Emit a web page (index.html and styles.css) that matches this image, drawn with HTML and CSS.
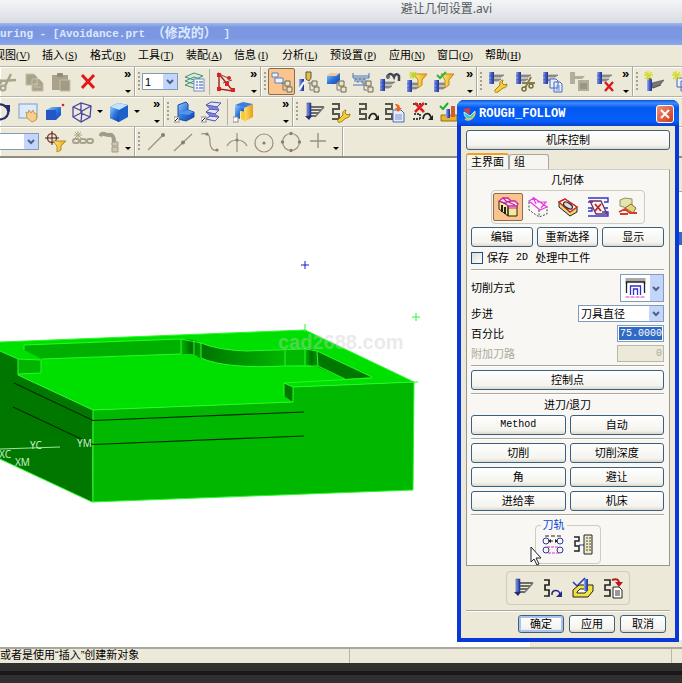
FILE: index.html
```html
<!DOCTYPE html>
<html lang="zh-CN">
<head>
<meta charset="utf-8">
<title>避让几何设置.avi</title>
<link rel="stylesheet" href="styles.css">
</head>
<body>
<svg class="defs" aria-hidden="true">
<defs>
<linearGradient id="steel" x1="0" x2="1"><stop offset="0" stop-color="#9cb0ee"/><stop offset=".5" stop-color="#4560c8"/><stop offset="1" stop-color="#22308c"/></linearGradient>
<linearGradient id="blue" x1="0" y1="0" x2="1" y2="1"><stop offset="0" stop-color="#9ccaf8"/><stop offset=".5" stop-color="#2d77dc"/><stop offset="1" stop-color="#123ea8"/></linearGradient>
<linearGradient id="gold" x1="0" x2="1"><stop offset="0" stop-color="#fff08a"/><stop offset="1" stop-color="#e8a010"/></linearGradient>
<linearGradient id="curveA"><stop offset="0" stop-color="#00b800"/><stop offset=".5" stop-color="#007000"/><stop offset="1" stop-color="#00a000"/></linearGradient>
<linearGradient id="curveB"><stop offset="0" stop-color="#007400"/><stop offset="1" stop-color="#00b800"/></linearGradient>
</defs>
<symbol id="p-tool" viewBox="0 0 22 22"><path d="M7 5h10l-3 2H7M7 9h7l-3 2H7" fill="#999" stroke="#666" stroke-width=".6"/><rect x="2" y="2" width="5" height="12" fill="url(#steel)"/><path d="M2 6l5-1M2 10l5-1M2 13l5-1" stroke="#3a4ca4" stroke-width=".6"/></symbol>
<symbol id="p-snake" viewBox="0 0 22 22"><path d="M2 3h7v5H3v5h6v5H2" fill="none" stroke="#55554c" stroke-width="2"/></symbol>
<symbol id="p-wrench" viewBox="0 0 22 22"><path d="M8 19l5-5c-1-3 1-5 3-5l-1 3 2 2 3-1c0 3-2 4-4 4l-5 4c-2 1-4 0-3-2z" fill="#f4cf3a" stroke="#a87c10"/></symbol>
<symbol id="p-pages" viewBox="0 0 22 22"><path d="M9 8h6l2 2v7H9zM13 11h6l2 2v8h-8z" fill="#e6efff" stroke="#4968b8"/><path d="M15 15h4M15 17h4M15 19h4" stroke="#6d8bd0"/></symbol>
<symbol id="p-tree" viewBox="0 0 22 22"><path d="M10 12h5M12 12v7h3" fill="none" stroke="#777"/><path d="M14 10h5v5h-5zM16 16h5v5h-5z" fill="#eee6b8" stroke="#666"/></symbol>
<symbol id="p-funnel" viewBox="0 0 22 22"><path d="M8 5h13l-5 6v5l-4 3v-8z" fill="url(#gold)" stroke="#c58a14"/></symbol>
<symbol id="p-arc" viewBox="0 0 22 22"><path d="M12 18c1-7 7-7 8-1" fill="none" stroke="#222" stroke-width="1.8"/><path d="M22 14v5h-5z" fill="#222"/></symbol>
<symbol id="i-cut" viewBox="0 0 22 22"><path d="M15 3l-6 12M4 10l16-1" stroke="#aaa38c" stroke-width="2.5"/><circle cx="7" cy="17" r="2.5" fill="none" stroke="#aaa38c" stroke-width="2"/><circle cx="3" cy="11" r="2" fill="none" stroke="#aaa38c" stroke-width="2"/></symbol>
<symbol id="i-copy" viewBox="0 0 22 22"><path d="M3 3h8l3 3v8H3zM9 8h7l4 4v8H9z" fill="#aaa38c" stroke="#c4bea9"/><path d="M11 13h5M11 16h7" stroke="#c8c3b0"/></symbol>
<symbol id="i-paste" viewBox="0 0 22 22"><path d="M2 4h16v15H2z" fill="#aaa38c"/><rect x="7" y="2" width="6" height="4" rx="1" fill="#918b77"/><path d="M10 9h10v11H10z" fill="#a29b84" stroke="#c4bea9"/></symbol>
<symbol id="i-x" viewBox="0 0 22 22"><path d="M5 4l12 13M17 4L5 17" stroke="#e01818" stroke-width="3"/></symbol>
<symbol id="i-layers" viewBox="0 0 22 22"><path d="M2 6l9-4 9 3-9 4zM2 10l9-4 9 3-9 4zM2 14l9-4 9 3-9 4z" fill="#d5ece2" stroke="#4b9173"/><rect x="11" y="8" width="10" height="12" fill="#f4f7ff" stroke="#7890c0"/><path d="M13 11h2M13 14h2M13 17h2M16 11h4M16 14h4M16 17h4" stroke="#3553a8"/></symbol>
<symbol id="i-csys" viewBox="0 0 22 22"><path d="M4 3v15l14 2z" fill="none" stroke="#a02020" stroke-width="1.4"/><path d="M4 3l9 4M8 12l9-3" stroke="#804040"/><g fill="#e02020"><rect x="2" y="2" width="4" height="4"/><rect x="2" y="16" width="4" height="4"/><rect x="16" y="17" width="4" height="4"/><rect x="10" y="11" width="4" height="4"/><circle cx="14" cy="7" r="2"/></g></symbol>
<symbol id="i-prog" viewBox="0 0 22 22"><path d="M1 2h6v4H1zM4 7h8v5H4z" fill="#eef4ff" stroke="#5c80c0"/><use href="#p-tree"/></symbol>
<symbol id="i-mach" viewBox="0 0 22 22"><path d="M8 1h5v6l-2 3-3-2z" fill="#e9bf33" stroke="#555"/><path d="M1 8h5v12H1z" fill="url(#steel)"/><path d="M1 19l5-8" stroke="#fff" stroke-width="2"/><use href="#p-tree"/></symbol>
<symbol id="i-geom" viewBox="0 0 22 22"><path d="M2 5l4-3h9v7l-4 4H2z" fill="url(#blue)"/><path d="M2 5l4-3h9l-4 3z" fill="#f5c59b"/><use href="#p-tree"/></symbol>
<symbol id="i-meth" viewBox="0 0 22 22"><path d="M1 2v5h16V2" fill="none" stroke="#4777b5"/><path d="M1 5h16M3 11v-3h2v3h2v-3h2v3h2v-3h2v3M1 14h13" fill="none" stroke="#4777b5"/><use href="#p-tree"/></symbol>
<symbol id="i-gen" viewBox="0 0 22 22"><use href="#p-tool" y="6" x="-1"/><path d="M8 6c2-4 5-4 7 0 1-3 3-4 5-1v5" fill="none" stroke="#404858" stroke-width="2.5"/><circle cx="9" cy="6" r="2" fill="#667"/></symbol>
<symbol id="i-fnew" viewBox="0 0 22 22"><use href="#p-tool" y="7" x="-1"/><use href="#p-funnel" y="-2"/><path d="M7 1v7M3 4h8M4 1l6 6M10 1L4 7" stroke="#c3d62b" stroke-width="1.2"/></symbol>
<symbol id="i-fchk" viewBox="0 0 22 22"><use href="#p-tool" y="7" x="-1"/><use href="#p-funnel" y="-2"/><path d="M4 4l3 3 6-6" fill="none" stroke="#2eb83c" stroke-width="2"/></symbol>
<symbol id="i-tw" viewBox="0 0 22 22"><use href="#p-tool" y="-1"/><use href="#p-wrench"/></symbol>
<symbol id="i-tc" viewBox="0 0 22 22"><use href="#p-tool" y="-1"/><path d="M17 6l-6 11M8 12h13" stroke="#88804c" stroke-width="2"/><circle cx="10" cy="18" r="2" fill="none" stroke="#776f3c" stroke-width="1.5"/><circle cx="17" cy="15" r="2" fill="none" stroke="#776f3c" stroke-width="1.5"/></symbol>
<symbol id="i-tp" viewBox="0 0 22 22"><use href="#p-tool" y="-1"/><use href="#p-pages"/></symbol>
<symbol id="i-tg" viewBox="0 0 22 22"><path d="M2 1h5v12H2zM7 5h10l-3 3H7zM10 9h11v11H10z" fill="#b3ad9b"/><path d="M12 12h7v6h-7z" fill="#9b9581"/></symbol>
<symbol id="i-tx" viewBox="0 0 22 22"><use href="#p-tool" y="-1"/><path d="M10 11l8 9M18 11l-8 9" stroke="#d81c1c" stroke-width="2.4"/></symbol>
<symbol id="i-new" viewBox="0 0 22 22"><path d="M9 12l12-3-4 5-8 3z" fill="#777" stroke="#444" stroke-width=".6"/><path d="M10 17l8-3" stroke="#555"/><rect x="4" y="7" width="5" height="13" fill="url(#steel)"/><path d="M5 0v9M1 4h9M2 1l7 7M9 1L2 8" stroke="#d6dc2a" stroke-width="1.4"/></symbol>
<symbol id="i-new2" viewBox="0 0 22 22"><use href="#p-pages" x="-2" y="-1"/><path d="M6 0v9M2 4h9M3 1l7 7M10 1L3 8" stroke="#d6dc2a" stroke-width="1.4"/></symbol>
<symbol id="i-rot" viewBox="0 0 22 22"><path d="M5 5c9-5 16 3 12 10-3 4-8 4-11 2" fill="none" stroke="#27306c" stroke-width="2.2"/><path d="M12 4h8v7z" fill="#27306c"/></symbol>
<symbol id="i-pan" viewBox="0 0 22 22"><rect x="2" y="3" width="18" height="14" fill="#dceafc" stroke="#7d9bd0"/><path d="M9 11l2 1 1-3 2 3 2-3 1 3 3 1-1 6-4 2-5-4z" fill="#f7cf8a" stroke="#c9974d"/></symbol>
<symbol id="i-brick" viewBox="0 0 22 22"><path d="M2 9l6-3h9v8l-5 5H2z" fill="url(#blue)"/><path d="M2 9h10v10H2z" fill="#2556c8"/><circle cx="19" cy="4" r="1.3" fill="#e02020"/></symbol>
<symbol id="i-wire" viewBox="0 0 22 22"><path d="M2 6l8-4 10 3-1 11-9 5-8-5zM2 6l9 4 9-5M11 10l-1 11M10 2v10M10 12l-8 4M10 12l9 4" fill="none" stroke="#4646a4" stroke-width="1.3"/></symbol>
<symbol id="i-cube" viewBox="0 0 22 22"><path d="M2 6l8-4 10 2v12l-9 5-9-4z" fill="#1d62c8"/><path d="M2 6l8-4 10 2-9 5z" fill="#c2e3ff"/><path d="M2 6l9 3v12l-9-4z" fill="url(#blue)"/></symbol>
<symbol id="i-part" viewBox="0 0 22 22"><path d="M4 4l8-3 2 2v6l6 2v5l-8 4-8-2z" fill="url(#blue)" stroke="#1d48a5"/><path d="M14 9l6 2-6 3-10-2" fill="#5595ec"/><rect y="16" width="5" height="5" fill="#fff" stroke="#888"/><path d="M1 20l3-3" stroke="#222"/></symbol>
<symbol id="i-sheet" viewBox="0 0 22 22"><path d="M5 4l5-3 10 1-4 4zM5 11l4-3 9 1-4 4zM5 18l4-3 9 1-4 4z" fill="#e4e4fb" stroke="#5353b2"/><path d="M5 4l11 2 2 3-9-1zM5 11l9 2 4 3-9-1z" fill="#8686dc" stroke="#5353b2" stroke-width=".7"/><rect y="16" width="5" height="5" fill="#fff" stroke="#888"/><path d="M1 20l3-3" stroke="#222"/></symbol>
<symbol id="i-gold" viewBox="0 0 22 22"><path d="M9 8l11-5v13l-9 5z" fill="url(#gold)"/><path d="M2 4l8-3 10 2-9 4z" fill="#3d7ce0"/><path d="M2 4l9 3v4l-4-1v8l-5-2z" fill="url(#blue)"/><path d="M8 10l4 1v9l-4-2z" fill="#f9cc34"/><rect y="16" width="5" height="5" fill="#fff" stroke="#888"/></symbol>
<symbol id="i-mill" viewBox="0 0 22 22"><path d="M8 6h13M7 9h11M7 12h9M7 15h6" stroke="#444" stroke-width="1.5"/><path d="M21 6l-9 10" stroke="#777" stroke-width="1.500"/><rect x="4" y="2" width="4" height="13" fill="url(#steel)" stroke="#203080" stroke-width=".5"/><path d="M2 15h7l-3 4z" fill="#222c6a"/></symbol>
<symbol id="i-sw" viewBox="0 0 22 22"><use href="#p-snake"/><use href="#p-wrench"/></symbol>
<symbol id="i-sa" viewBox="0 0 22 22"><use href="#p-snake"/><use href="#p-arc"/></symbol>
<symbol id="i-sp" viewBox="0 0 22 22"><use href="#p-snake" x="-1"/><path d="M9 9h8l3 3v9H9z" fill="#e4edff" stroke="#526aa5"/><path d="M11 14h7M11 16h7M11 18h7" stroke="#7790c4"/><path d="M11 3c4 0 5 2 5 4h2l-4 4-3-4h2c0-2-1-2-2-4z" fill="#e86a22"/></symbol>
<symbol id="i-sx" viewBox="0 0 22 22"><path d="M2 3h14M2 18h7M3 13h6v5" fill="none" stroke="#444" stroke-width="2" stroke-dasharray="2 1"/><path d="M4 2l9 9M13 2l-9 9" stroke="#e02020" stroke-width="2.5"/><use href="#p-arc"/></symbol>
<symbol id="i-ver" viewBox="0 0 22 22"><path d="M3 14h16v6H3z" fill="#e9b42c" stroke="#9a7010"/><path d="M8 8h4v9H8z" fill="url(#steel)"/><path d="M13 5h4v11h-4z" fill="#d25c30"/><path d="M2 5l3 3 5-6" fill="none" stroke="#20b030" stroke-width="2"/></symbol>
<symbol id="i-snapf" viewBox="0 0 22 22"><circle cx="7" cy="7" r="4.5" fill="none" stroke="#a04030" stroke-width="1.5"/><path d="M7 0v14M0 7h14" stroke="#282828"/><path d="M8 10h13l-5 5v4l-4 2v-6z" fill="url(#gold)" stroke="#b98a20"/></symbol>
<symbol id="i-chain" viewBox="0 0 22 22"><path d="M6 0v8M2 4h8M3 1l6 6M9 1L3 7" stroke="#aaa38c"/><g fill="none" stroke="#aaa38c" stroke-width="2"><rect x="1" y="8" width="6" height="4" rx="2"/><rect x="8" y="8" width="6" height="4" rx="2"/><rect x="15" y="8" width="6" height="4" rx="2"/></g></symbol>
<symbol id="i-path" viewBox="0 0 22 22"><path d="M1 5c3-5 6 0 9-1s5 1 5 7" fill="none" stroke="#a29b86" stroke-width="4"/><path d="M13 11h6v4h-6zM13 16h6v5h-6z" fill="#ccc7b5" stroke="#a29b86"/></symbol>
<symbol id="i-end" viewBox="0 0 22 22"><path d="M3 19L18 4" stroke="#9b9080" stroke-width="1.2"/><circle cx="18" cy="4" r="2" fill="#8c7d6e"/></symbol>
<symbol id="i-mid" viewBox="0 0 22 22"><path d="M2 20L20 3" stroke="#9b9080" stroke-width="1.2"/><circle cx="11" cy="11.5" r="2" fill="#8c7d6e"/></symbol>
<symbol id="i-ctl" viewBox="0 0 22 22"><path d="M2 3c10-2 9 5 9 9s3 9 8 7" fill="none" stroke="#9b9080" stroke-width="1.2"/><circle cx="8" cy="3" r="1.6" fill="#8c7d6e"/><circle cx="18" cy="19" r="1.6" fill="#8c7d6e"/></symbol>
<symbol id="i-int" viewBox="0 0 22 22"><path d="M11 2v19M1 15c4-8 16-8 20 0" fill="none" stroke="#9b9080" stroke-width="1.2"/><circle cx="11" cy="9" r="1.6" fill="#8c7d6e"/></symbol>
<symbol id="i-cen" viewBox="0 0 22 22"><circle cx="11" cy="12" r="9" fill="none" stroke="#9b9080" stroke-width="1.2"/><circle cx="11" cy="12" r="1.6" fill="#8c7d6e"/></symbol>
<symbol id="i-quad" viewBox="0 0 22 22"><circle cx="11" cy="11" r="8.5" fill="none" stroke="#9b9080" stroke-width="1.2"/><g fill="#8c7d6e"><circle cx="11" cy="2.5" r="1.7"/><circle cx="11" cy="19.5" r="1.7"/><circle cx="2.500" cy="11" r="1.700"/><circle cx="19.500" cy="11" r="1.700"/></g></symbol>
<symbol id="i-pt" viewBox="0 0 22 22"><path d="M11 2v15M3 10h16" stroke="#9b9080" stroke-width="1.4"/></symbol>
<symbol id="g-part" viewBox="0 0 22 22"><path d="M2 5v8l9 7V9zM11 9v11h9V9z" fill="#f6ea94" stroke="#222"/><path d="M5 9v7M8 11v7" stroke="#222" stroke-width="2"/><path d="M2 5l4-3h5l3 3h4l3 3-1 2h-9L8 7z" fill="#fbe6c4" stroke="#c322b4" stroke-width="1.300"/><path d="M6 2l3 3v3M14 5l-5 1M9 5l9 4M12 12h8" fill="none" stroke="#c322b4" stroke-width="1.200"/><path d="M14 13h5v6h-5z" fill="#f6ea94"/></symbol>
<symbol id="g-blank" viewBox="0 0 22 22"><path d="M2 6v8l10 7 8-3v-7M12 14v7" fill="none" stroke="#444" stroke-dasharray="2 1.500"/><path d="M2 5l5-3 13 9-7 3zM6 1l3 7M10 6h9l-5 6" fill="none" stroke="#e63be6" stroke-width="1.2"/></symbol>
<symbol id="g-check" viewBox="0 0 22 22"><path d="M2 6l6-3 12 8v5l-7 4L2 11z" fill="#e7d67c" stroke="#222"/><path d="M2 6l6-3 12 8-7 5z" fill="#fff" stroke="#d42020" stroke-width="1.5"/><ellipse cx="11" cy="9.500" rx="5" ry="2.500" transform="rotate(33 11 9.500)" fill="#ddd" stroke="#333" stroke-width="1.300"/></symbol>
<symbol id="g-trim" viewBox="0 0 22 22"><path d="M1 2h20v4h-4M1 6h5M1 12h4v3H1M21 12h-4M1 20h20v-4h-6" fill="none" stroke="#3434d8" stroke-width="1.4"/><path d="M3 5h11l6 13H9z" fill="none" stroke="#70305c" stroke-width="1.300"/><path d="M8 8l6 7M14 8l-6 7" stroke="#c02020" stroke-width="1.8"/></symbol>
<symbol id="g-fix" viewBox="0 0 22 22"><path d="M3 4l5-2 7 1v6l-5 3-7-2z" fill="#e6e4ad" stroke="#909060"/><path d="M8 12l6-4 5 4-3 5z" fill="#e8d378" stroke="#77703e"/><path d="M2 16l6-3 5 4h7M3 18h8" fill="none" stroke="#d63a28" stroke-width="1.8"/></symbol>
<symbol id="g-opt" viewBox="0 0 22 22"><path d="M3 2h16M7 7h8" stroke="#222" stroke-dasharray="4 2"/><g fill="none" stroke="#2d35a0"><circle cx="4" cy="7" r="3"/><circle cx="18" cy="7" r="3"/><circle cx="4" cy="16" r="3"/><circle cx="18" cy="16" r="3"/></g><path d="M5 13h12M6 19h12" stroke="#d43bb8" stroke-dasharray="3 1"/><path d="M9 5v4l-3-2zM13 5v4l3-2z" fill="#222"/></symbol>
<symbol id="g-list" viewBox="0 0 22 22"><path d="M2 3h5v4H3v5h4v5H2" fill="none" stroke="#222" stroke-width="1.500"/><path d="M7 11h5" stroke="#2d35a0"/><path d="M12 1h8v19h-8z" fill="#eee9c5" stroke="#222"/><path d="M14 4h5M14 7h5M14 10h5M14 13h5M14 16h5" stroke="#444" stroke-dasharray="2 1"/></symbol>
<symbol id="g-replay" viewBox="0 0 22 22"><path d="M2 3h5v5H3v5h4v6H2" fill="none" stroke="#222" stroke-width="1.700"/><path d="M10 18c-1-6 8-6 8 0" fill="none" stroke="#252a88" stroke-width="1.500"/><path d="M20 14v6h-6z" fill="#252a88"/></symbol>
<symbol id="g-ver" viewBox="0 0 22 22"><path d="M1 13l6-5h14v6l-5 6H1z" fill="#f3e13e" stroke="#222"/><path d="M5 15l3-3h8l-3 4H5z" fill="#fff" stroke="#222"/><path d="M12 2h4v12h-4z" fill="url(#steel)"/><path d="M1 5l4 4 8-8" fill="none" stroke="#2438b0" stroke-width="1.500"/></symbol>
<symbol id="g-post" viewBox="0 0 22 22"><path d="M2 3h6v5H3v5h5v6H2" fill="none" stroke="#222" stroke-width="1.600"/><path d="M11 10h6l3 3v8h-9z" fill="#fff" stroke="#222"/><path d="M13 14h5M13 16h5M13 18h5" stroke="#333"/><path d="M10 3c5-2 7 0 7 3" fill="none" stroke="#b81820" stroke-width="2"/><path d="M13 5h8l-4 5z" fill="#b81820"/></symbol>
<symbol id="g-follow" viewBox="0 0 22 22"><path d="M1 1h20v6h-2V5H3v2H1z" fill="#aaa"/><path d="M2 16V5h18v11" fill="none" stroke="#222" stroke-width="1.300"/><path d="M6 18V9h10v9M9 18v-6h4v6" fill="none" stroke="#3030d0" stroke-width="1.300"/><path d="M1 20h20" stroke="#d03cc0" stroke-dasharray="4 1"/></symbol>
</svg>

<header class="player">避让几何设置.avi</header>
<main class="app">
  <div class="app-title">uring - [Avoidance.prt <span>（修改的）</span> ]</div>
  <nav class="menu">
    <a href="#">视图<span>(<u>V</u>)</span></a><a href="#">插入<span>(<u>S</u>)</span></a><a href="#">格式<span>(<u>R</u>)</span></a><a href="#">工具<span>(<u>T</u>)</span></a><a href="#">装配<span>(<u>A</u>)</span></a><a href="#">信息<span>(<u>I</u>)</span></a><a href="#">分析<span>(<u>L</u>)</span></a><a href="#">预设置<span>(<u>P</u>)</span></a><a href="#">应用<span>(<u>N</u>)</span></a><a href="#">窗口<span>(<u>O</u>)</span></a><a href="#">帮助<span>(<u>H</u>)</span></a>
  </nav>
  <div class="bar">
    <div class="grp lead w-134"><button><svg><use href="#i-cut"/></svg></button><button><svg><use href="#i-copy"/></svg></button><button><svg><use href="#i-paste"/></svg></button><button><svg><use href="#i-x"/></svg></button><i class="more"></i></div>
    <div class="grp w-126"><i class="grip"></i><select class="combo num" aria-label="图层"><option>1</option></select><button><svg><use href="#i-layers"/></svg></button><i class="line"></i><button><svg><use href="#i-csys"/></svg></button><i class="more"></i></div>
    <div class="grp w-216"><i class="grip"></i><button class="on"><svg><use href="#i-prog"/></svg></button><button><svg><use href="#i-mach"/></svg></button><button><svg><use href="#i-geom"/></svg></button><button><svg><use href="#i-meth"/></svg></button><button><svg><use href="#i-gen"/></svg></button><button><svg><use href="#i-fnew"/></svg></button><button><svg><use href="#i-fchk"/></svg></button><i class="more"></i></div>
    <div class="grp w-156"><i class="grip"></i><button><svg><use href="#i-tw"/></svg></button><button><svg><use href="#i-tc"/></svg></button><button><svg><use href="#i-tp"/></svg></button><button><svg><use href="#i-tg"/></svg></button><button><svg><use href="#i-tx"/></svg></button><i class="more"></i></div>
    <div class="grp"><i class="grip"></i><button><svg><use href="#i-new"/></svg></button><button><svg><use href="#i-new2"/></svg></button></div>
  </div>
  <div class="bar">
    <div class="grp lead2 w-163"><button><svg><use href="#i-rot"/></svg></button><button><svg><use href="#i-pan"/></svg></button><button><svg><use href="#i-brick"/></svg></button><button><svg><use href="#i-wire"/></svg></button><i class="drop"></i><button><svg><use href="#i-cube"/></svg></button><i class="drop"></i><i class="more"></i></div>
    <div class="grp w-129"><i class="grip"></i><button><svg><use href="#i-part"/></svg></button><button><svg><use href="#i-sheet"/></svg></button><i class="line"></i><button><svg><use href="#i-gold"/></svg></button><i class="more"></i></div>
    <div class="grp"><i class="grip"></i><button><svg><use href="#i-mill"/></svg></button><button><svg><use href="#i-sw"/></svg></button><button><svg><use href="#i-sa"/></svg></button><button><svg><use href="#i-sp"/></svg></button><button><svg><use href="#i-sx"/></svg></button><button><svg><use href="#i-ver"/></svg></button></div>
  </div>
  <div class="bar">
    <div class="grp w-134"><select class="combo filter" aria-label="过滤器"><option></option></select><button><svg><use href="#i-snapf"/></svg></button><button><svg><use href="#i-chain"/></svg></button><button><svg><use href="#i-path"/></svg></button><i class="drop low"></i></div>
    <div class="grp w-208"><i class="grip"></i><button><svg><use href="#i-end"/></svg></button><button><svg><use href="#i-mid"/></svg></button><button><svg><use href="#i-ctl"/></svg></button><button><svg><use href="#i-int"/></svg></button><button><svg><use href="#i-cen"/></svg></button><button><svg><use href="#i-quad"/></svg></button><button><svg><use href="#i-pt"/></svg></button><i class="drop low"></i></div>
    <div class="grp"></div>
  </div>

  <div class="work">
    <svg class="scene" viewBox="0 158 530 489" preserveAspectRatio="xMinYMin meet">
      <path d="M0 342L305 330 414 382 293 387 293 402 93 410 18 375 0 366z" fill="#00e000"/>
      <path d="M0 351L18 359V375L93 410 92 502 0 459z" fill="#007800"/>
      <path d="M93 410L293 402V387L414 382 413 490 92 502z" fill="#00b800"/>
      <path d="M24 345L181 339V354L42 359 24 350z" fill="#00b000"/>
      <path d="M18 359L41 360V373L18 374z" fill="#00b400"/>
      <path d="M181 339L194 340 201 343V359L194 354H181z" fill="url(#curveA)"/>
      <path d="M201 343Q218 350 246 351L285 350V366Q225 369 201 358z" fill="url(#curveB)"/>
      <path d="M285 350L305 349V365L285 366z" fill="#00b800"/>
      <path d="M305 349Q313 349 317 351L318 367 305 365z" fill="url(#curveA)"/>
      <path d="M317 351L372 377 345 379 318 367z" fill="#007800"/>
      <path d="M284 383L293 387V402L284 396z" fill="#007800"/>
      <g fill="none" stroke="#28f828"><path d="M0 342L305 330 414 382 413 490 92 502 0 459M93 410V502M93 410L293 402V387L414 382M93 410L18 375V359L0 351M18 359L41 360V373L18 374M24 350V345L181 339 201 343Q218 350 246 351L305 349 317 351 372 377M42 359L181 354M181 339V354M194 340V354M201 343V358Q225 369 285 366L318 366 345 379M285 350V366M305 349V365M317 351L318 366M284 396V383L372 378M284 383L293 387M305 324V332M410 382H418M412 317H420M416 313V321"/></g>
      <path d="M14 383L93 420.500 304 412M13 407L93 444.500 304 436" fill="none" stroke="#002800" stroke-width="1.200"/>
      <path d="M301 265H309M305 261V269" stroke="#1818e0"/>
      <path d="M0 449L60 447" stroke="#9fe49f"/>
      <g class="axis"><text x="30" y="449">YC</text><text x="-1" y="458">XC</text><text x="15" y="466">XM</text><text x="77" y="447">YM</text></g>
      <text class="mark" x="278" y="349">cad2688.com</text>
    </svg>
    <aside class="dock"><div class="dock-head"></div><div class="dock-list"><div class="dock-row"></div></div><div class="dock-foot"></div></aside>
  </div>
  <footer class="status"><span>或者是使用“插入”创建新对象</span><span></span><span></span></footer>
</main>
<div class="deck"></div>
<div class="seek"></div>

<form class="dialog" onsubmit="return false">
  <div class="dlg-title"><svg viewBox="0 0 14 14"><path d="M2 5c0 7 7 10 10 3l1-4-5 5z" fill="#3cc3d4" stroke="#bdf4f0"/><path d="M1 2l7-1-1 7z" fill="#e23a3a"/><path d="M3 12c5 3 10-2 10-7" fill="none" stroke="#e5c64a" stroke-width="1.500"/></svg><h1>ROUGH_FOLLOW</h1><button class="close" aria-label="关闭"><svg viewBox="0 0 10 10"><path d="M1 1l8 8M9 1L1 9" stroke="#fff" stroke-width="2"/></svg></button></div>
  <div class="dlg-body">
    <button class="btn">机床控制</button>
    <div class="tabs"><button class="tab active">主界面</button><button class="tab">组</button></div>
    <section class="panel">
      <h2>几何体</h2>
      <div class="icons geo"><button class="on"><svg><use href="#g-part"/></svg></button><button><svg><use href="#g-blank"/></svg></button><button><svg><use href="#g-check"/></svg></button><button><svg><use href="#g-trim"/></svg></button><button><svg><use href="#g-fix"/></svg></button></div>
      <div class="row three"><button class="btn">编辑</button><button class="btn">重新选择</button><button class="btn">显示</button></div>
      <label class="check"><input type="checkbox">保存 <span class="latin">2D</span> 处理中工件</label>
      <hr>
      <div class="field"><span>切削方式</span><button class="pick" aria-label="切削方式"><svg><use href="#g-follow"/></svg><i></i></button></div>
      <div class="field"><label for="step">步进</label><select id="step" class="combo step"><option>刀具直径</option></select></div>
      <div class="field"><label for="pct">百分比</label><input id="pct" class="val sel" value="75.0000"></div>
      <div class="field off"><label for="add">附加刀路</label><input id="add" class="val" value="0" disabled></div>
      <hr>
      <button class="btn">控制点</button>
      <hr>
      <h2 class="mid">进刀/退刀</h2>
      <div class="row two"><button class="btn latin">Method</button><button class="btn">自动</button></div>
      <hr>
      <div class="row two"><button class="btn">切削</button><button class="btn">切削深度</button><button class="btn">角</button><button class="btn">避让</button><button class="btn">进给率</button><button class="btn">机床</button></div>
      <hr>
      <fieldset><legend>刀轨</legend><button><svg><use href="#g-opt"/></svg></button><button><svg><use href="#g-list"/></svg></button></fieldset>
    </section>
    <div class="icons acts"><button><svg><use href="#i-mill"/></svg></button><button><svg><use href="#g-replay"/></svg></button><button><svg><use href="#g-ver"/></svg></button><button><svg><use href="#g-post"/></svg></button></div>
    <hr class="wide">
    <div class="ends"><button class="btn ok">确定</button><button class="btn">应用</button><button class="btn">取消</button></div>
  </div>
  <svg class="cursor" viewBox="0 0 12 20"><path d="M1 1v15l3-3 3 6 2-1-3-6h5z" fill="#fff" stroke="#222"/></svg>
</form>
</body>
</html>
```
FILE: styles.css
```css
* { box-sizing: border-box; }
body {
  margin: 0;
  min-height: 100vh;
  display: flex;
  flex-direction: column;
  position: relative;
  overflow: hidden;
  background: #303030;
  color: #000;
  font: 11px/14px "Liberation Sans", "Noto Sans CJK SC", sans-serif;
}
button, input, select { font: inherit; color: inherit; padding: 0; margin: 0; }
button { border: 0; background: none; display: grid; place-items: center; }
svg { display: block; }
a { color: inherit; text-decoration: none; }
.defs { position: absolute; width: 0; height: 0; }

.player {
  height: 23px;
  padding: 1px 190px 0 0;
  text-align: right;
  font: 12px/16px "Noto Sans", "Noto Sans CJK SC", sans-serif;
  color: #555960;
  background: linear-gradient(#f4f5f6, #d8dce2);
}
.app { flex: 1; display: flex; flex-direction: column; min-height: 0; background: #ece9d8; }
.app-title {
  height: 22px;
  overflow: hidden;
  white-space: pre;
  font: bold 11px/22px "Liberation Mono", "Noto Sans CJK SC", monospace;
  color: #dce8ff;
  background: linear-gradient(#a0b8f0, #7a96e0 20%, #7c98e2 70%, #88a8ec);
}
.app-title span { font-size: 13px; }
.menu {
  height: 21px;
  display: flex;
  align-items: center;
  gap: 12px;
  margin-left: -6px;
  white-space: nowrap;
}
.menu a { display: flex; }
.menu span { width: 14px; text-align: center; font: 10px/15px "Liberation Serif", serif; }

.bar { height: 30px; display: flex; border-top: 1px solid #b8b4a4; }
.grp {
  flex: 0 0 auto;
  min-width: 0;
  display: flex;
  align-items: center;
  border-left: 1px solid #aca899;
  box-shadow: inset 1px 1px #fff;
}
.grp:first-child { border-left: 0; }
.grp:last-child { flex: 1; overflow: hidden; }
.w-134 { width: 134px; }
.w-126 { width: 126px; }
.w-216 { width: 216px; }
.w-156 { width: 156px; }
.w-163 { width: 163px; }
.w-129 { width: 129px; }
.w-208 { width: 208px; }
.grp button { flex: 0 0 27px; height: 27px; }
.grp svg { width: 22px; height: 22px; }
.lead button:first-child { margin-left: -7px; }
.lead2 button:first-child { margin-left: -13px; }
.on { background: #fbc48c; border: 1px solid #8a6c50; border-radius: 2px; }
.grip { flex: 0 0 2px; height: 20px; margin: 0 2px 0 3px; background: repeating-linear-gradient(#a5a190 0 2px, transparent 2px 4px); }
.line { flex: 0 0 1px; height: 26px; margin: 0 2px; background: #b4b09f; }
.more { margin-left: auto; width: 13px; height: 22px; display: flex; flex-direction: column; justify-content: space-between; align-items: center; font: bold 13px/6px "Liberation Sans", sans-serif; }
.more::before { content: "»"; }
.more::after, .drop::after { content: ""; border: 3px solid transparent; border-top-color: #000; border-bottom: 0; }
.drop { flex: 0 0 10px; display: grid; place-items: center; }
.low { padding-top: 14px; }
.combo {
  appearance: none;
  height: 17px;
  padding: 0 2px;
  border: 1px solid #7f9db9;
  border-radius: 0;
  background: url("data:image/svg+xml,%3Csvg xmlns='http://www.w3.org/2000/svg' width='14' height='15'%3E%3Crect width='14' height='15' rx='1' fill='%23c4d5fb'/%3E%3Cpath d='M4 6l3 3 3-3' fill='none' stroke='%234d6185' stroke-width='2'/%3E%3C/svg%3E") right center no-repeat #fff;
}
.num { width: 36px; margin-right: 2px; }
.filter { width: 39px; margin-right: 3px; border-left: 0; }

.work { flex: 1; min-height: 0; display: flex; background: #fff; border-top: 2px solid #8f8c80; overflow: hidden; }
.scene { flex: 1; min-width: 0; align-self: flex-start; }
.axis { font: 10px "Noto Sans", sans-serif; fill: #c4f0c4; }
.mark { font: bold 20px "Liberation Sans", sans-serif; fill: #c8c8c8; fill-opacity: .4; }
.dock { width: 152px; display: flex; flex-direction: column; border-left: 1px solid #e4e2d6; background: #ece9d8; }
.dock-head { height: 34px; border-bottom: 1px solid #aaa; }
.dock-list { flex: 1; background: #fff; padding-top: 40px; }
.dock-row { height: 13px; background: #316ac5; }
.dock-foot { height: 7px; }
.status { height: 16px; display: flex; border-top: 2px solid #aaa89c; line-height: 13px; white-space: nowrap; }
.status span { flex: 1; border-right: 1px solid #bbb7a7; margin-right: 2px; }
.status span:first-child { flex: 0 0 350px; }
.status span:last-child { flex: 0 0 8px; border: 0; margin: 0; }
.deck { height: 12px; background: linear-gradient(#303030 8px, #181818 8px); }
.seek { height: 9px; background: linear-gradient(#303030, #303030) top / 100% 8px no-repeat, linear-gradient(90deg, #ddd 58%, #0b5cc0 58% 73%, #ddd 73%); }

.dialog {
  position: absolute;
  top: 100px;
  right: 3px;
  width: 222px;
  border: solid #0a38d8;
  border-width: 0 4px 4px;
  border-radius: 7px 7px 0 0;
  background: #0a38d8;
}
.dlg-title {
  height: 26px;
  margin: 0 -4px;
  padding: 2px 5px 0;
  display: flex;
  align-items: center;
  gap: 3px;
  border-radius: 7px 7px 0 0;
  background: linear-gradient(#0a50d8, #3a8cff 12%, #0458ee 30%, #0660ff 80%, #0440c8);
}
.dlg-title > svg { width: 14px; height: 14px; }
h1 { margin: 0; flex: 1; font: bold 12px/14px "Liberation Mono", monospace; color: #fff; }
.close { width: 18px; height: 18px; border: 1px solid #fff; border-radius: 3px; background: linear-gradient(135deg, #f09078, #d03818); }
.close svg { width: 10px; height: 10px; }
.dlg-body { padding: 4px 5px 5px; background: #ece9d8; }
.btn {
  width: 100%;
  height: 20px;
  border: 1px solid #3c617f;
  border-radius: 3px;
  background: linear-gradient(#fff, #f4f3ee 80%, #dcd8cc);
}
.latin { font: 10px/14px "Liberation Mono", monospace; }
.tabs { display: flex; align-items: flex-end; height: 16px; margin-top: 3px; }
.tab { height: 15px; width: 40px; justify-content: start; padding: 0 4px; background: #f6f5f0; border: 1px solid #a5a8a0; border-bottom: 0; border-radius: 3px 3px 0 0; }
.tab.active { width: 43px; height: 16px; border-top: 2px solid #f0a020; white-space: nowrap; }
.panel { padding: 2px 5px 1px 4px; border: 1px solid #98978c; border-top-color: #d0d0c8; background: #f8f7f4; }
h2 { margin: 0; font: inherit; line-height: 16px; text-align: center; }
.icons { display: flex; justify-content: center; align-items: center; height: 34px; margin: 2px auto 3px; border: 1px solid #cfccbc; border-radius: 4px; }
.icons button { width: 30px; height: 28px; }
.icons svg, fieldset svg { width: 22px; height: 22px; }
.geo { width: 154px; }
.row { display: grid; gap: 4px; }
.three { grid-template-columns: repeat(3, 1fr); }
.two { grid-template-columns: 1fr 1fr; }
.check { display: flex; align-items: center; gap: 4px; height: 16px; margin-top: 3px; white-space: pre; }
.check input { appearance: none; width: 12px; height: 12px; border: 1px solid #1c5180; background: linear-gradient(135deg, #dcdcd7, #fff); }
hr { height: 2px; margin: 3px 0; border: 0; border-top: 1px solid #aca899; border-bottom: 1px solid #fff; }
.field { display: flex; align-items: center; justify-content: space-between; margin-bottom: 3px; }
.pick { display: flex; width: 44px; height: 28px; border: 1px solid #7f9db9; background: #fff; }
.pick svg { flex: 1; height: 22px; }
.pick i { width: 13px; height: 26px; background: url("data:image/svg+xml,%3Csvg xmlns='http://www.w3.org/2000/svg' width='13' height='15'%3E%3Cpath d='M3 6l3 3 3-3' fill='none' stroke='%234d6185' stroke-width='2'/%3E%3C/svg%3E") center no-repeat #c4d5fb; }
.step { width: 86px; height: 17px; }
.val { width: 47px; height: 17px; padding: 1px; border: 1px solid #7f9db9; background: #fff; text-align: right; font: 10px/13px "Liberation Mono", monospace; }
.sel { color: #fff; background: linear-gradient(#316ac5, #316ac5) content-box, #fff; }
.off, .off .val { color: #aca899; }
.off .val { background: #ece9d8; border-color: #b8b8aa; }
.mid { line-height: 15px; margin-bottom: 2px; }
fieldset { display: flex; justify-content: center; width: 66px; height: 45px; margin: 0 auto; padding: 0; border: 1px solid #cfccbc; border-radius: 4px; }
fieldset button { width: 30px; height: 28px; }
legend { margin-left: 5px; padding: 0 2px; color: #0a46d5; line-height: 12px; }
.acts { width: 124px; margin: 5px auto; }
.wide { margin: 0 0 3px; }
.ends { display: flex; justify-content: flex-end; gap: 5px; padding-right: 4px; }
.ends .btn { width: 46px; height: 18px; }
.ok { box-shadow: inset 0 0 0 2px #a8c4f0; }
.cursor { position: absolute; left: 69px; top: 446px; width: 12px; height: 20px; }
```
